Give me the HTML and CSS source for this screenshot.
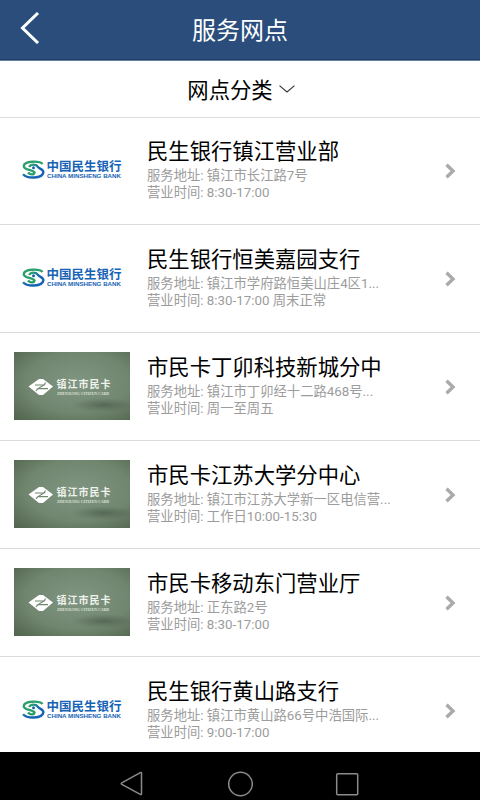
FILE: index.html
```
<!DOCTYPE html>
<html lang="zh-CN">
<head>
<meta charset="utf-8">
<title>服务网点</title>
<link rel="stylesheet" href="styles.css">
</head>
<body>
<svg class="defs" aria-hidden="true">
  <defs>
    <linearGradient id="swirl" x1="0" y1="0" x2="1" y2="1">
      <stop offset="0.2" stop-color="#2ba06c"/><stop offset="0.5" stop-color="#1763b5"/>
    </linearGradient>
    <radialGradient id="card-bg" cx="0.55" cy="0.45" r="0.75">
      <stop offset="0" stop-color="#819682"/><stop offset="0.6" stop-color="#71866f"/><stop offset="1" stop-color="#53664f"/>
    </radialGradient>
    <radialGradient id="card-shade">
      <stop offset="0" stop-color="#435445" stop-opacity="0.6"/><stop offset="1" stop-color="#435445" stop-opacity="0"/>
    </radialGradient>
    <symbol id="bank" viewBox="0 0 116 68">
      <g fill="none" stroke-width="2.4">
        <path stroke="#2ba06c" d="M28.5 28C26 24.8 10 24.3 9.8 30.2C9.8 34.5 19 33.2 20.5 36.5C20 39 16 39 14 36.5"/>
        <path stroke="url(#swirl)" d="M15 30.8C17 27.6 22.5 28.2 24 31C26 33.2 29.8 33.4 29.3 36.5C28.5 42.8 13 42.8 9 38.2"/>
      </g>
      <circle cx="19.5" cy="31.7" r="1.5" fill="#1763b5"/>
      <text class="bank-cn" x="32.5" y="35.3" textLength="75">中国民生银行</text>
      <text class="bank-en" x="33" y="42.2" textLength="74" lengthAdjust="spacingAndGlyphs">CHINA MINSHENG BANK</text>
    </symbol>
    <symbol id="card" viewBox="0 0 116 68">
      <rect width="116" height="68" fill="url(#card-bg)"/>
      <ellipse cx="90" cy="53" rx="32" ry="7" fill="url(#card-shade)"/>
      <path fill="#fff" d="M14.5 34.5L25 27H29L39 34.5L29 43H25Z"/>
      <path fill="none" stroke="#71866f" stroke-width="1.1" d="M21 33H30L24 36.6H34M30 33L31.5 30.5M24 36.6L22 39"/>
      <text class="card-cn" x="42.5" y="35.5" textLength="54">镇江市民卡</text>
      <text class="card-en" x="43" y="43.3" textLength="52" lengthAdjust="spacingAndGlyphs">ZHENJIANG CITIZEN CARD</text>
    </symbol>
    <symbol id="chevron" viewBox="0 0 12 16">
      <path fill="none" stroke="#aaa" stroke-width="3.4" d="M1.5 1.8L8 8L1.5 14.2"/>
    </symbol>
  </defs>
</svg>
<header class="header">
  <svg class="back" viewBox="0 0 20 32"><path fill="none" stroke="#fff" stroke-width="3" d="M18 1L2.5 16L18 31"/></svg>
  <h1>服务网点</h1>
</header>
<div class="filter">
  <span>网点分类</span>
  <svg class="down" viewBox="0 0 16 8"><path fill="none" stroke="#333" stroke-width="1.1" d="M.5 .7L8 7L15.5 .7"/></svg>
</div>
<main class="list">
  <article class="row">
    <svg class="logo"><use href="#bank"/></svg>
    <div class="info"><h2>民生银行镇江营业部</h2><p>服务地址: 镇江市长江路7号</p><p>营业时间: 8:30-17:00</p></div>
    <svg class="arrow"><use href="#chevron"/></svg>
  </article>
  <article class="row">
    <svg class="logo"><use href="#bank"/></svg>
    <div class="info"><h2>民生银行恒美嘉园支行</h2><p>服务地址: 镇江市学府路恒美山庄4区1...</p><p>营业时间: 8:30-17:00 周末正常</p></div>
    <svg class="arrow"><use href="#chevron"/></svg>
  </article>
  <article class="row">
    <svg class="logo"><use href="#card"/></svg>
    <div class="info"><h2>市民卡丁卯科技新城分中</h2><p>服务地址: 镇江市丁卯经十二路468号...</p><p>营业时间: 周一至周五</p></div>
    <svg class="arrow"><use href="#chevron"/></svg>
  </article>
  <article class="row">
    <svg class="logo"><use href="#card"/></svg>
    <div class="info"><h2>市民卡江苏大学分中心</h2><p>服务地址: 镇江市江苏大学新一区电信营...</p><p>营业时间: 工作日10:00-15:30</p></div>
    <svg class="arrow"><use href="#chevron"/></svg>
  </article>
  <article class="row">
    <svg class="logo"><use href="#card"/></svg>
    <div class="info"><h2>市民卡移动东门营业厅</h2><p>服务地址: 正东路2号</p><p>营业时间: 8:30-17:00</p></div>
    <svg class="arrow"><use href="#chevron"/></svg>
  </article>
  <article class="row">
    <svg class="logo"><use href="#bank"/></svg>
    <div class="info"><h2>民生银行黄山路支行</h2><p>服务地址: 镇江市黄山路66号中浩国际...</p><p>营业时间: 9:00-17:00</p></div>
    <svg class="arrow"><use href="#chevron"/></svg>
  </article>
</main>
<nav class="navbar">
  <svg viewBox="0 0 26 26"><path d="M21.5 2.2V22.8Q21.5 24 20.3 23.4L1.8 13.4Q.6 12.6 1.8 11.8L20.3 1.6Q21.5 1 21.5 2.2Z"/></svg>
  <svg viewBox="0 0 26 26"><circle cx="13.5" cy="13" r="11.8"/></svg>
  <svg viewBox="0 0 26 26"><rect x="2.7" y="2.7" width="21" height="21" rx="1"/></svg>
</nav>
</body>
</html>
```

FILE: styles.css
```
* { box-sizing: border-box; }
body {
  margin: 0;
  width: 480px;
  height: 800px;
  overflow: hidden;
  display: flex;
  flex-direction: column;
  background: #fff;
  font-family: Roboto, "Noto Sans CJK SC", sans-serif;
}
h1, h2, p { margin: 0; font-weight: 400; white-space: nowrap; }
.defs { position: absolute; width: 0; height: 0; }
.header {
  flex: none;
  height: 61px;
  display: grid;
  grid-template-columns: 60px 1fr 60px;
  align-items: center;
  background: #2a4d7c;
  border-bottom: 1px solid #6480a4;
  box-shadow: inset 0 -1px #203c65;
  color: #fff;
}
.header h1 { font-size: 24px; line-height: 58px; padding-top: 2px; text-align: center; }
.back { width: 20px; height: 32px; margin: 0 0 4px 20px; }
.filter {
  flex: none;
  height: 57px;
  display: flex;
  align-items: center;
  justify-content: center;
  gap: 6px;
  padding: 0 0 2px 2px;
  border-bottom: 1px solid #dcdcdc;
  font-size: 21.33px;
  color: #000;
}
.down { width: 16px; height: 8px; margin-top: 2px; }
.list { flex: none; height: 634px; overflow: hidden; }
.row {
  height: 108px;
  display: grid;
  grid-template-columns: 116px 1fr 12px;
  column-gap: 17px;
  padding: 0 23px 0 14px;
  border-bottom: 1px solid #dcdcdc;
}
.row:first-child { height: 107px; }
.row:first-child .info { padding-top: 19px; }
.row:first-child .logo { margin-top: 18px; }
.row:first-child .arrow { margin-top: 45px; }
.logo { width: 116px; height: 68px; margin-top: 19px; }
.arrow { width: 12px; height: 16px; margin-top: 46px; }
.info { padding-top: 20px; }
.info h2 { font-size: 21.33px; line-height: 30px; color: #000; }
.info p { font-size: 13.33px; line-height: 17px; color: #9c9c9c; }
.bank-cn { font: 700 12.5px "Noto Sans CJK SC", sans-serif; fill: #1763b5; }
.bank-en { font: 700 6px "Liberation Sans", sans-serif; fill: #1763b5; }
.card-cn { font: 700 10px "Noto Sans CJK SC", sans-serif; fill: #eef2ec; }
.card-en { font: 700 4.8px "Liberation Serif", serif; fill: #dce4da; }
.navbar {
  flex: none;
  height: 48px;
  display: flex;
  justify-content: center;
  gap: 81px;
  padding-top: 19px;
  background: #000;
}
.navbar svg { width: 26px; height: 26px; fill: none; stroke: #8b8b8b; stroke-width: 1.5; }
```
